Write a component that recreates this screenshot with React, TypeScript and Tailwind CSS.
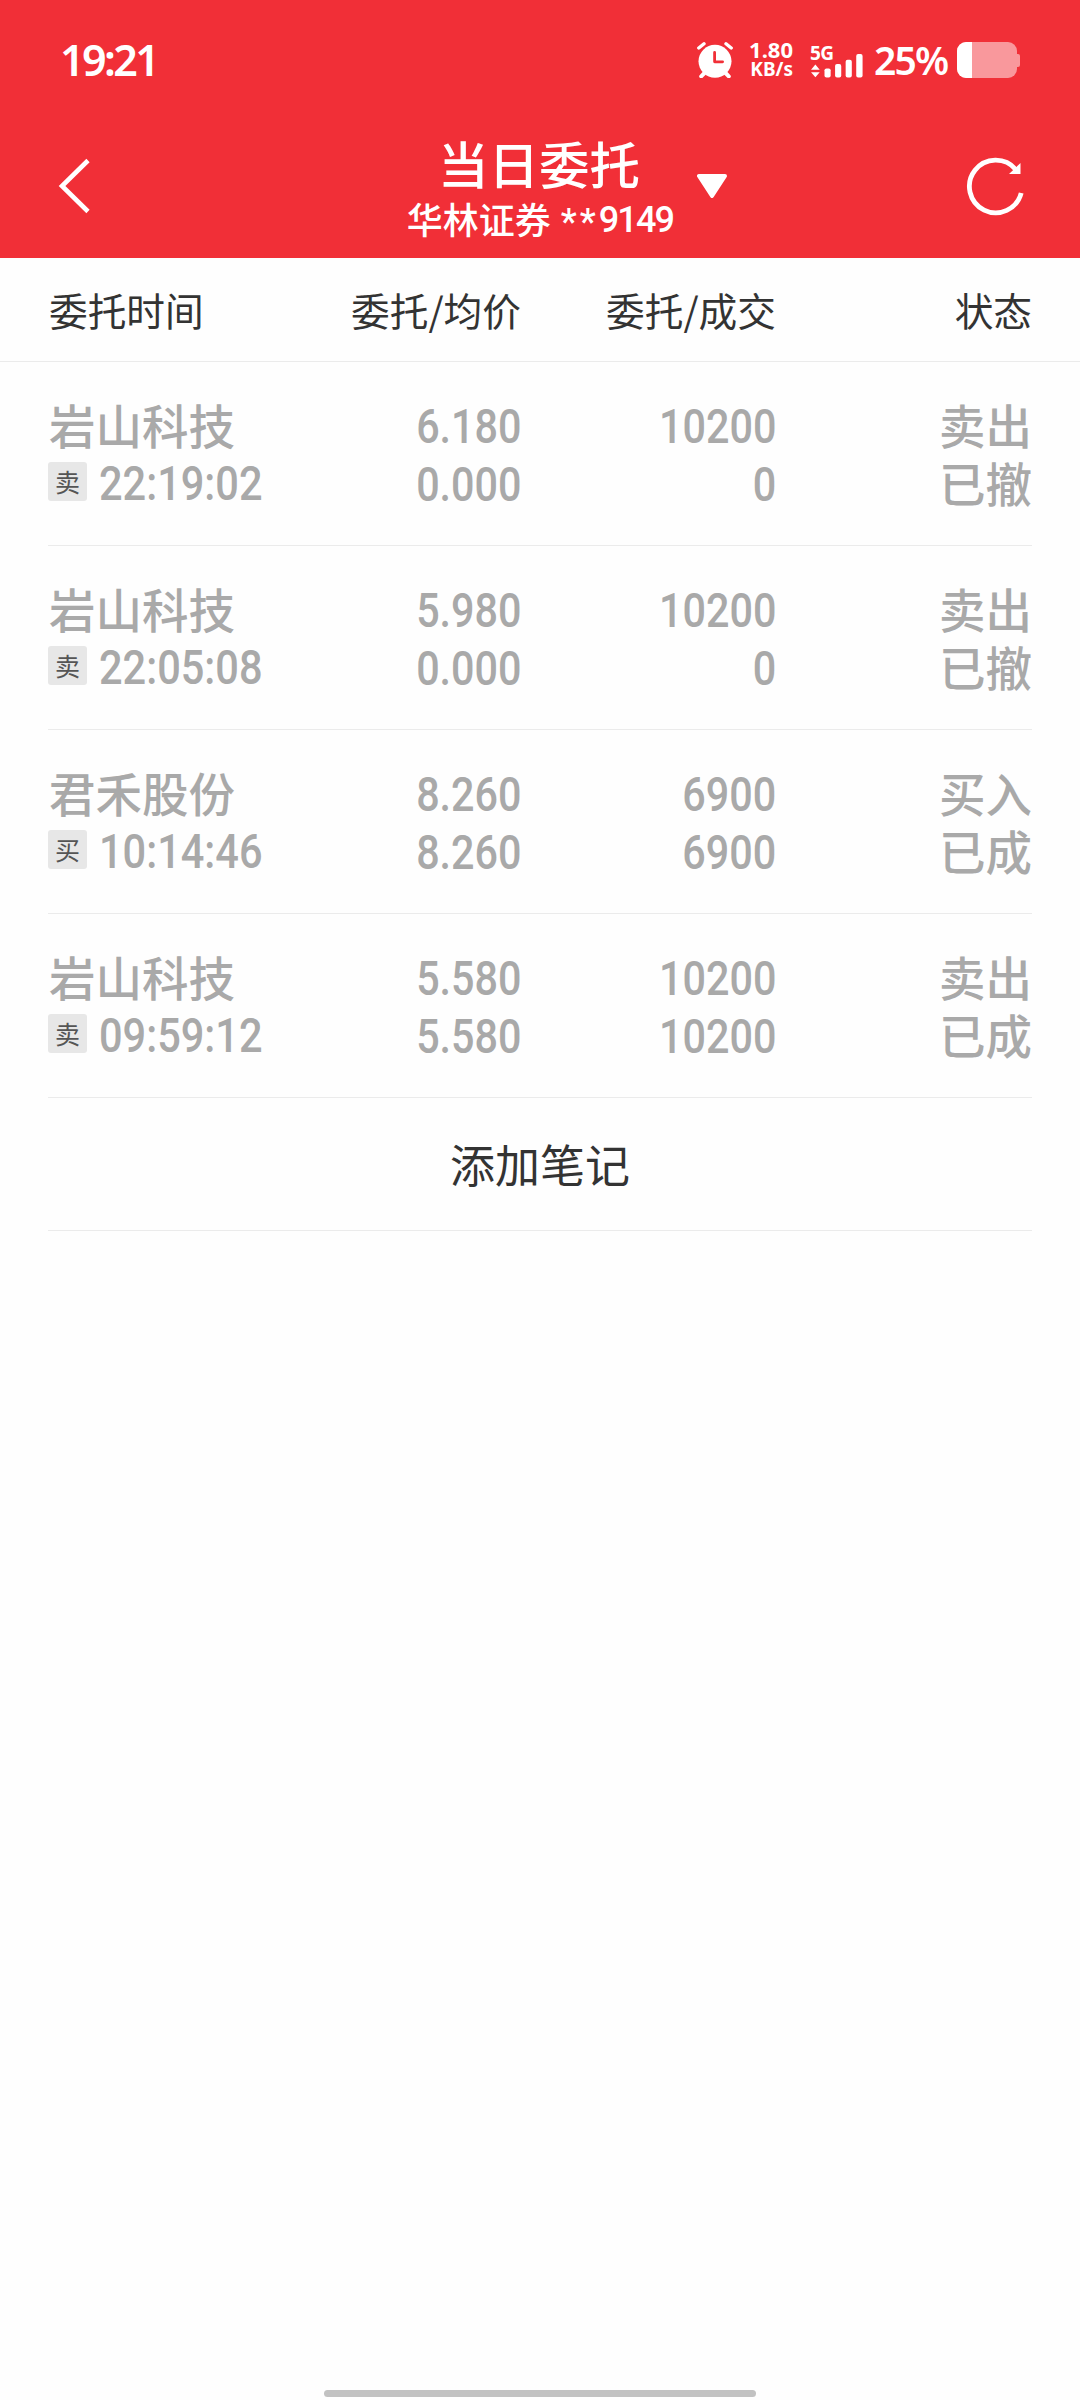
import { clsx } from "clsx";

interface Order {
  name: string;
  tag: string;
  time: string;
  price: string;
  avgPrice: string;
  amount: string;
  filled: string;
  side: string;
  status: string;
}

const orders: Order[] = [
  { name: "岩山科技", tag: "卖", time: "22:19:02", price: "6.180", avgPrice: "0.000", amount: "10200", filled: "0", side: "卖出", status: "已撤" },
  { name: "岩山科技", tag: "卖", time: "22:05:08", price: "5.980", avgPrice: "0.000", amount: "10200", filled: "0", side: "卖出", status: "已撤" },
  { name: "君禾股份", tag: "买", time: "10:14:46", price: "8.260", avgPrice: "8.260", amount: "6900", filled: "6900", side: "买入", status: "已成" },
  { name: "岩山科技", tag: "卖", time: "09:59:12", price: "5.580", avgPrice: "5.580", amount: "10200", filled: "10200", side: "卖出", status: "已成" },
];

const columns = "grid grid-cols-[236px_237px_255px_256px]";

function AlarmIcon() {
  return (
    <svg width="36" height="36" viewBox="0 0 36 36" fill="none" className="shrink-0">
      <path d="M7 31.5 4.2 34.3M29 31.5l2.8 2.8" stroke="#fff" strokeWidth="4" strokeLinecap="round" />
      <path d="M1.8 6 7 1.8M34.2 6 29 1.8" stroke="#fff" strokeWidth="3.4" strokeLinecap="round" />
      <circle cx="18" cy="19.3" r="16.5" fill="#fff" />
      <path d="M17.6 10.5v9.3h8" stroke="#f12f37" strokeWidth="2.8" strokeLinecap="round" strokeLinejoin="round" />
    </svg>
  );
}

function SignalIcon() {
  return (
    <svg width="54" height="26" viewBox="0 0 54 26" fill="#fff">
      <path d="M4.5 12 9 17.3H0zM4.5 25.3 9 20H0z" />
      <rect x="14" y="16" width="6.4" height="9.5" rx="2" />
      <rect x="25" y="11.5" width="6.4" height="14" rx="2" />
      <rect x="36" y="7" width="6.4" height="18.5" rx="2" />
      <rect x="47" y="1" width="6.6" height="24.5" rx="2" />
    </svg>
  );
}

function BatteryIcon() {
  return (
    <div className="flex items-center">
      <div className="h-9 w-[60px] overflow-hidden rounded-[9px] bg-[#f9989c]">
        <div className="h-full w-[15px] bg-white" />
      </div>
      <div className="h-[13px] w-[3px] rounded-r-[2px] bg-[#f9989c]" />
    </div>
  );
}

function StatusBar() {
  return (
    <div className="flex h-[120px] items-center justify-between pr-[60px] pl-[60px] font-['Noto_Sans',sans-serif]">
      <span className="-mt-0.5 text-[43px] leading-none font-semibold tracking-[-2.6px]">19:21</span>
      <div className="flex items-center">
        <AlarmIcon />
        <div className="-mt-[3px] ml-[14px] flex w-[46px] flex-col items-end text-[22px] leading-[20px] font-bold">
          <span>1.80</span>
          <span className="text-[19px]">KB/s</span>
        </div>
        <div className="ml-[17px] flex h-9 w-[54px] flex-col justify-end">
          <span className="-mb-[12px] text-[19px] leading-[23px] font-bold tracking-[-0.5px]">5G</span>
          <SignalIcon />
        </div>
        <span className="-mt-0.5 ml-[10px] w-[74px] text-[39px] leading-none font-semibold tracking-[-1.8px]">25%</span>
        <div className="ml-[9px]">
          <BatteryIcon />
        </div>
      </div>
    </div>
  );
}

function NavBar() {
  return (
    <div className="grid h-[138px] grid-cols-[400px_280px_400px]">
      <button className="flex h-[132px] items-center pl-[58px]">
        <svg width="34" height="56" viewBox="0 0 34 56" fill="none">
          <path d="M30 2.5 4 28l26 25.5" stroke="#fff" strokeWidth="4.6" />
        </svg>
      </button>
      <div className="flex flex-col items-center whitespace-nowrap">
        <h1 className="mt-[15px] -ml-0.5 text-[50.5px] leading-[54px] font-medium">当日委托</h1>
        <p className="mt-2 flex text-[36px] leading-[42px] font-medium">
          华林证券
          <span className="ml-[10px] flex font-['Roboto',sans-serif]">
            <span className="mt-1 tracking-[3px]">**</span>
            <span className="mt-0.5 tracking-[-1.8px]">9149</span>
          </span>
        </p>
      </div>
      <div className="flex h-[132px] items-center justify-between pr-[54px] pl-[17px]">
        <svg width="30" height="24" viewBox="0 0 30 24" fill="#fff" stroke="#fff" strokeWidth="4" strokeLinejoin="round">
          <path d="M2 2h26L15 22z" />
        </svg>
        <svg width="60" height="60" viewBox="0 0 60 60" fill="none">
          <path d="M55.2 37a26.3 26.3 0 1 1-5.4-23.5" stroke="#fff" strokeWidth="4.8" />
          <path d="M54.5 7v11H43z" fill="#fff" />
        </svg>
      </div>
    </div>
  );
}

// Condensed digits used for prices, amounts and times
function Num({ children, left }: { children: string; left?: boolean }) {
  return (
    <span
      className={clsx(
        "inline-block font-['Roboto',sans-serif] text-[48px]",
        left ? "origin-left scale-x-[0.865]" : "origin-right scale-x-[0.86]"
      )}
    >
      {children}
    </span>
  );
}

function OrderRow({ order }: { order: Order }) {
  return (
    <div className={clsx(columns, "mx-12 h-[184px] border-b border-[#ebebeb] pt-[33px] text-[46.5px] leading-[58px] font-medium text-[#a9a9a9]")}>
      <div>
        <div className="pl-px">{order.name}</div>
        <div className="flex h-[58px] items-center">
          <span className="-mt-0.5 flex size-[39px] shrink-0 items-center justify-center rounded-[3px] bg-[#e7e7e7] text-[25px] font-normal text-[#555]">
            {order.tag}
          </span>
          <span className="ml-3">
            <Num left>{order.time}</Num>
          </span>
        </div>
      </div>
      <div className="flex flex-col items-end pt-[3px]">
        <Num>{order.price}</Num>
        <Num>{order.avgPrice}</Num>
      </div>
      <div className="flex flex-col items-end pt-[3px]">
        <Num>{order.amount}</Num>
        <Num>{order.filled}</Num>
      </div>
      <div className="text-right">
        <div>{order.side}</div>
        <div>{order.status}</div>
      </div>
    </div>
  );
}

export default function App() {
  return (
    <div className="flex h-[2400px] w-[1080px] flex-col bg-[#fefefe] font-['Noto_Sans_CJK_SC',sans-serif] text-[#333]">
      <header className="bg-[#f12f37] text-white">
        <StatusBar />
        <NavBar />
      </header>

      <div className="h-[104px] border-b border-[#ebebeb]">
        <div className={clsx(columns, "mx-12 text-[38.7px] leading-[103px]")}>
          <span className="pl-px">委托时间</span>
          <span className="text-right">委托/均价</span>
          <span className="text-right">委托/成交</span>
          <span className="text-right">状态</span>
        </div>
      </div>

      <main>
        {orders.map((order) => (
          <OrderRow key={order.time} order={order} />
        ))}
        <button className="mx-12 block h-[133px] w-[984px] border-b border-[#ebebeb] text-center text-[45px]">
          添加笔记
        </button>
      </main>

      <div className="mx-auto mt-auto mb-[3px] h-[7px] w-[432px] rounded-full bg-[#c2c2c2]" />
    </div>
  );
}
